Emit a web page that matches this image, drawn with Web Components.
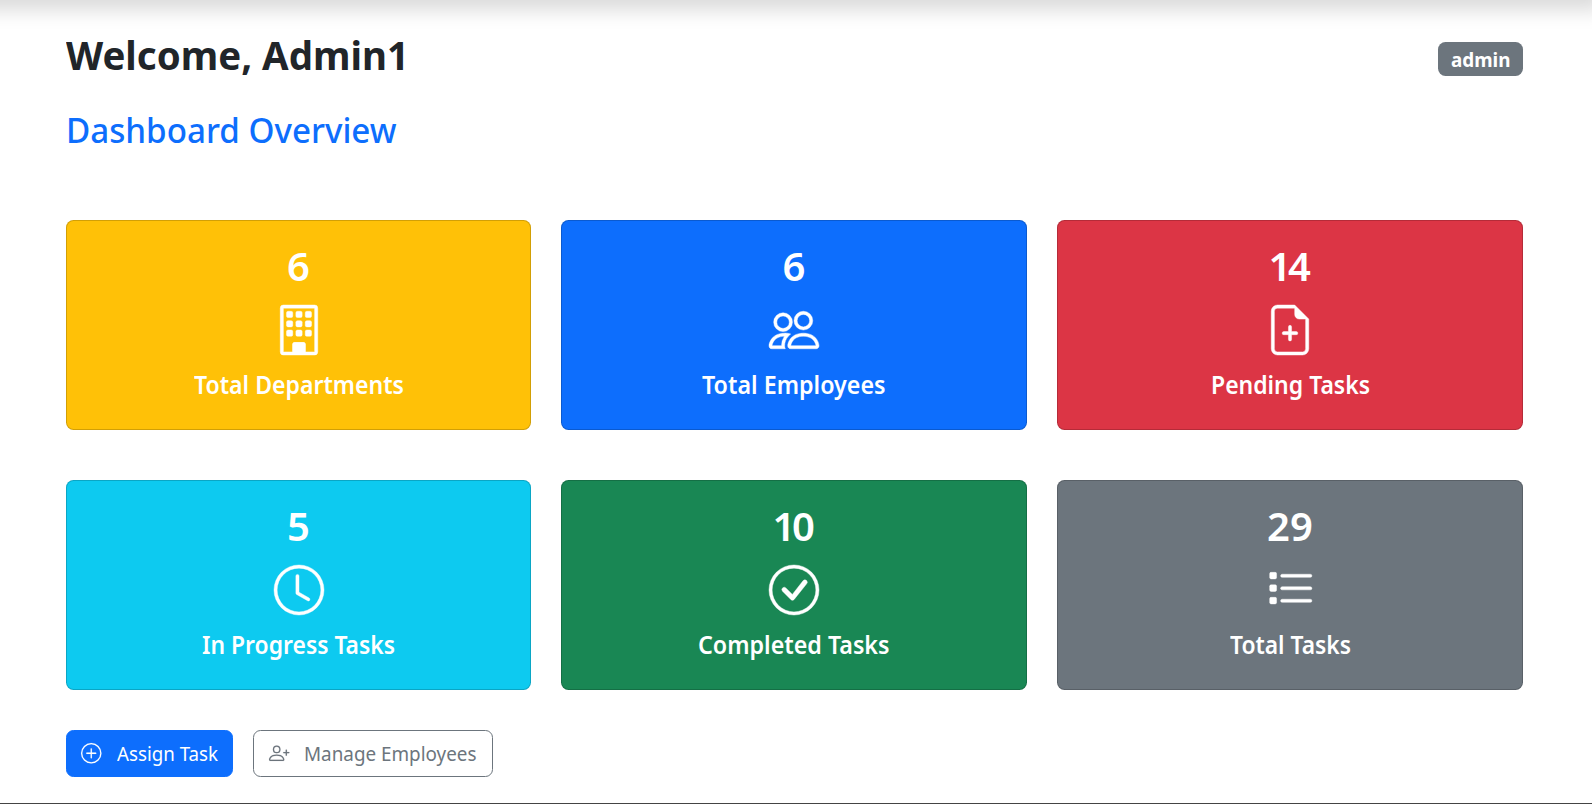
<!DOCTYPE html>
<html lang="en">
<head>
<meta charset="utf-8">
<title>Dashboard</title>
<style>
html, body { margin: 0; height: 804px; overflow: hidden; background: #fff; }
body { font-family: "Noto Sans", "Open Sans", sans-serif; color: #212529; }
</style>
</head>
<body>
<admin-dashboard>
  <stat-card color="#ffc107" icon="building" count="6" label="Total Departments" fit="210"></stat-card>
  <stat-card color="#0d6efd" icon="people" count="6" label="Total Employees" fit="183.5"></stat-card>
  <stat-card color="#dc3545" icon="file" count="14" label="Pending Tasks" fit="159" style="--tight:-3.5px;--trail:4px"></stat-card>
  <stat-card color="#0dcaf0" icon="clock" count="5" label="In Progress Tasks" fit="193"></stat-card>
  <stat-card color="#198754" icon="check" count="10" label="Completed Tasks" fit="191.5" style="--tight:-3.5px;--trail:4px"></stat-card>
  <stat-card color="#6c757d" icon="list" count="29" label="Total Tasks" fit="121"></stat-card>
  <action-button slot="actions" icon="plus" fit="101" style="--bg:#0d6efd;--fg:#fff;--line:#0d6efd;width:167px">Assign Task</action-button>
  <action-button slot="actions" icon="person" fit="172.5" style="--bg:#fff;--fg:#6c757d;--line:#6c757d;--inset:14.6px;width:240px">Manage Employees</action-button>
</admin-dashboard>
<script>
const win = [4, 7, 10].map(x => [2, 5, 8].map(y => `<rect x="${x}" y="${y}" width="2" height="2" rx=".5"/>`).join('')).join('');
const ring = '<path d="M8 15A7 7 0 1 1 8 1a7 7 0 0 1 0 14zm0 1A8 8 0 1 0 8 0a8 8 0 0 0 0 16z"/>';
const ICONS = {
  building: win + '<path d="M2 1a1 1 0 0 1 1-1h10a1 1 0 0 1 1 1v14a1 1 0 0 1-1 1H3a1 1 0 0 1-1-1V1Zm11 0H3v14h3v-2.5a.5.5 0 0 1 .5-.5h3a.5.5 0 0 1 .5.5V15h3V1Z"/><rect x="6" y="12" width="4" height="3.5" rx=".5"/>',
  people: '<path d="M15 14s1 0 1-1-1-4-5-4-5 3-5 4 1 1 1 1h8zm-7.978-1A.261.261 0 0 1 7 12.996c.001-.264.167-1.03.76-1.72C8.312 10.629 9.282 10 11 10c1.717 0 2.687.63 3.24 1.276.593.69.758 1.457.76 1.72l-.008.002a.274.274 0 0 1-.014.002H7.022zM11 7a2 2 0 1 0 0-4 2 2 0 0 0 0 4zm3-2a3 3 0 1 1-6 0 3 3 0 0 1 6 0zM6.936 9.28a5.88 5.88 0 0 0-1.23-.247A7.35 7.35 0 0 0 5 9c-4 0-5 3-5 4 0 .667.333 1 1 1h4.216A2.238 2.238 0 0 1 5 13c0-1.01.377-2.042 1.09-2.904.243-.294.526-.569.846-.816zM4.92 10A5.493 5.493 0 0 0 4 13H1c0-.26.164-1.03.76-1.724.545-.636 1.492-1.256 3.16-1.275zM1.5 5.5a3 3 0 1 1 6 0 3 3 0 0 1-6 0zm3-2a2 2 0 1 0 0 4 2 2 0 0 0 0-4z"/>',
  file: '<path d="M8 6.5a.5.5 0 0 1 .5.5v1.5H10a.5.5 0 0 1 0 1H8.5V11a.5.5 0 0 1-1 0V9.5H6a.5.5 0 0 1 0-1h1.5V7a.5.5 0 0 1 .5-.5z"/><path d="M14 4.5V14a2 2 0 0 1-2 2H4a2 2 0 0 1-2-2V2a2 2 0 0 1 2-2h5.5L14 4.5zm-3 0A1.5 1.5 0 0 1 9.5 3V1H4a1 1 0 0 0-1 1v12a1 1 0 0 0 1 1h8a1 1 0 0 0 1-1V4.5h-2z"/>',
  clock: ring + '<path d="M8 3.5a.5.5 0 0 0-1 0V9a.5.5 0 0 0 .252.434l3.5 2a.5.5 0 0 0 .496-.868L8 8.71V3.5z"/>',
  check: ring + '<path d="M10.97 4.97a.235.235 0 0 0-.02.022L7.477 9.417 5.384 7.323a.75.75 0 0 0-1.06 1.06L6.97 11.03a.75.75 0 0 0 1.079-.02l3.992-4.99a.75.75 0 0 0-1.071-1.05z"/>',
  list: [2.35, 6.35, 10.35].map(y => `<rect x="1.5" y="${y}" width="2.2" height="2.1" rx=".45"/><rect x="5" y="${y + .6}" width="10" height="1" rx=".5"/>`).join(''),
  plus: ring + '<path d="M8 4a.5.5 0 0 1 .5.5v3h3a.5.5 0 0 1 0 1h-3v3a.5.5 0 0 1-1 0v-3h-3a.5.5 0 0 1 0-1h3v-3A.5.5 0 0 1 8 4z"/>',
  person: '<path d="M6 8a3 3 0 1 0 0-6 3 3 0 0 0 0 6zm2-3a2 2 0 1 1-4 0 2 2 0 0 1 4 0zm4 8c0 1-1 1-1 1H1s-1 0-1-1 1-4 6-4 6 3 6 4zm-1-.004c-.001-.246-.154-.986-.832-1.664C9.516 10.68 8.289 10 6 10c-2.29 0-3.516.68-4.168 1.332-.678.678-.83 1.418-.832 1.664h10z"/><path d="M13.5 5a.5.5 0 0 1 .5.5V7h1.5a.5.5 0 0 1 0 1H14v1.5a.5.5 0 0 1-1 0V8h-1.5a.5.5 0 0 1 0-1H13V5.5a.5.5 0 0 1 .5-.5z"/>'
};
const icon = (name, size) => `<svg width="${size}" height="${size}" viewBox="0 0 16 16" fill="currentColor" fill-rule="evenodd" stroke="currentColor" aria-hidden="true">${ICONS[name]}</svg>`;

/* One line of text condensed to a given advance width. */
customElements.define('fit-text', class extends HTMLElement {
  connectedCallback() {
    const root = this.attachShadow({ mode: 'open' });
    const w = parseFloat(this.getAttribute('width'));
    root.innerHTML = `<style>
      :host { display: block; width: ${w}px; white-space: nowrap; }
      span { display: inline-block; transform-origin: 0 50%; }
    </style><span><slot></slot></span>`;
    const span = root.querySelector('span');
    span.style.transform = `scaleX(${w / span.getBoundingClientRect().width})`;
  }
});

customElements.define('stat-card', class extends HTMLElement {
  connectedCallback() {
    const a = n => this.getAttribute(n);
    this.attachShadow({ mode: 'open' }).innerHTML = `<style>
      :host { box-sizing: border-box; height: 210px; display: flex; flex-direction: column; align-items: center;
        padding-top: 21px; border: 1px solid rgba(0,0,0,.175); border-radius: 7.5px; background: ${a('color')}; color: #fff; }
      .count { font-size: 40px; line-height: 48px; font-weight: 600; letter-spacing: var(--tight, 0); margin-right: var(--trail, 0); }
      svg { display: block; margin-top: 15px; stroke-width: .14; overflow: visible; }
      .label { font-size: 25px; line-height: 30px; font-weight: 560; margin-top: 14px; }
    </style><div class="count">${a('count')}</div>${icon(a('icon'), 50)}
    <fit-text class="label" width="${a('fit')}">${a('label')}</fit-text>`;
  }
});

customElements.define('action-button', class extends HTMLElement {
  connectedCallback() {
    this.attachShadow({ mode: 'open' }).innerHTML = `<style>
      :host { box-sizing: border-box; height: 47px; display: flex; align-items: center; gap: 15px; padding-left: var(--inset, 14px);
        border: 1px solid var(--line); border-radius: 7.5px; background: var(--bg); color: var(--fg); font-size: 20px; line-height: 30px; }
      svg { flex: none; stroke-width: .08; overflow: visible; }
      fit-text { flex: none; }
    </style>${icon(this.getAttribute('icon'), 20.5)}<fit-text width="${this.getAttribute('fit')}"><slot></slot></fit-text>`;
  }
});

customElements.define('admin-dashboard', class extends HTMLElement {
  connectedCallback() {
    this.attachShadow({ mode: 'open' }).innerHTML = `<style>
      :host { display: flex; flex-direction: column; box-sizing: border-box; height: 804px; border-bottom: 1px solid #444; overflow: hidden; }
      .bar { flex: none; height: 60px; margin: -60px -12px 0 -30px; box-shadow: 0 10px 20px rgba(0,0,0,.15); }
      main { padding: 31px 69px 0 66px; }
      header { display: flex; justify-content: space-between; align-items: flex-start; height: 48px; }
      h1 { margin: 0; font-size: 40px; line-height: 48px; font-weight: 700; }
      h2 { margin: 30px 0 0; font-size: 35px; line-height: 42px; font-weight: 480; color: #0d6efd; }
      .badge { box-sizing: border-box; width: 85px; height: 34px; margin-top: 11px; padding: 8px 13px; border-radius: 7.5px;
        background: #6c757d; color: #fff; font-size: 20px; line-height: 20px; font-weight: 700; }
      .grid { display: grid; grid-template-columns: 465px 1fr 1fr; gap: 50px 30px; margin-top: 69px; }
      .actions { display: flex; gap: 20px; margin-top: 40px; }
    </style>
    <div class="bar"></div>
    <main>
      <header><h1><fit-text width="343">Welcome, Admin1</fit-text></h1><div class="badge"><fit-text width="59.5">admin</fit-text></div></header>
      <h2><fit-text width="330.5">Dashboard Overview</fit-text></h2>
      <div class="grid"><slot></slot></div>
      <div class="actions"><slot name="actions"></slot></div>
    </main>`;
  }
});
</script>
</body>
</html>
